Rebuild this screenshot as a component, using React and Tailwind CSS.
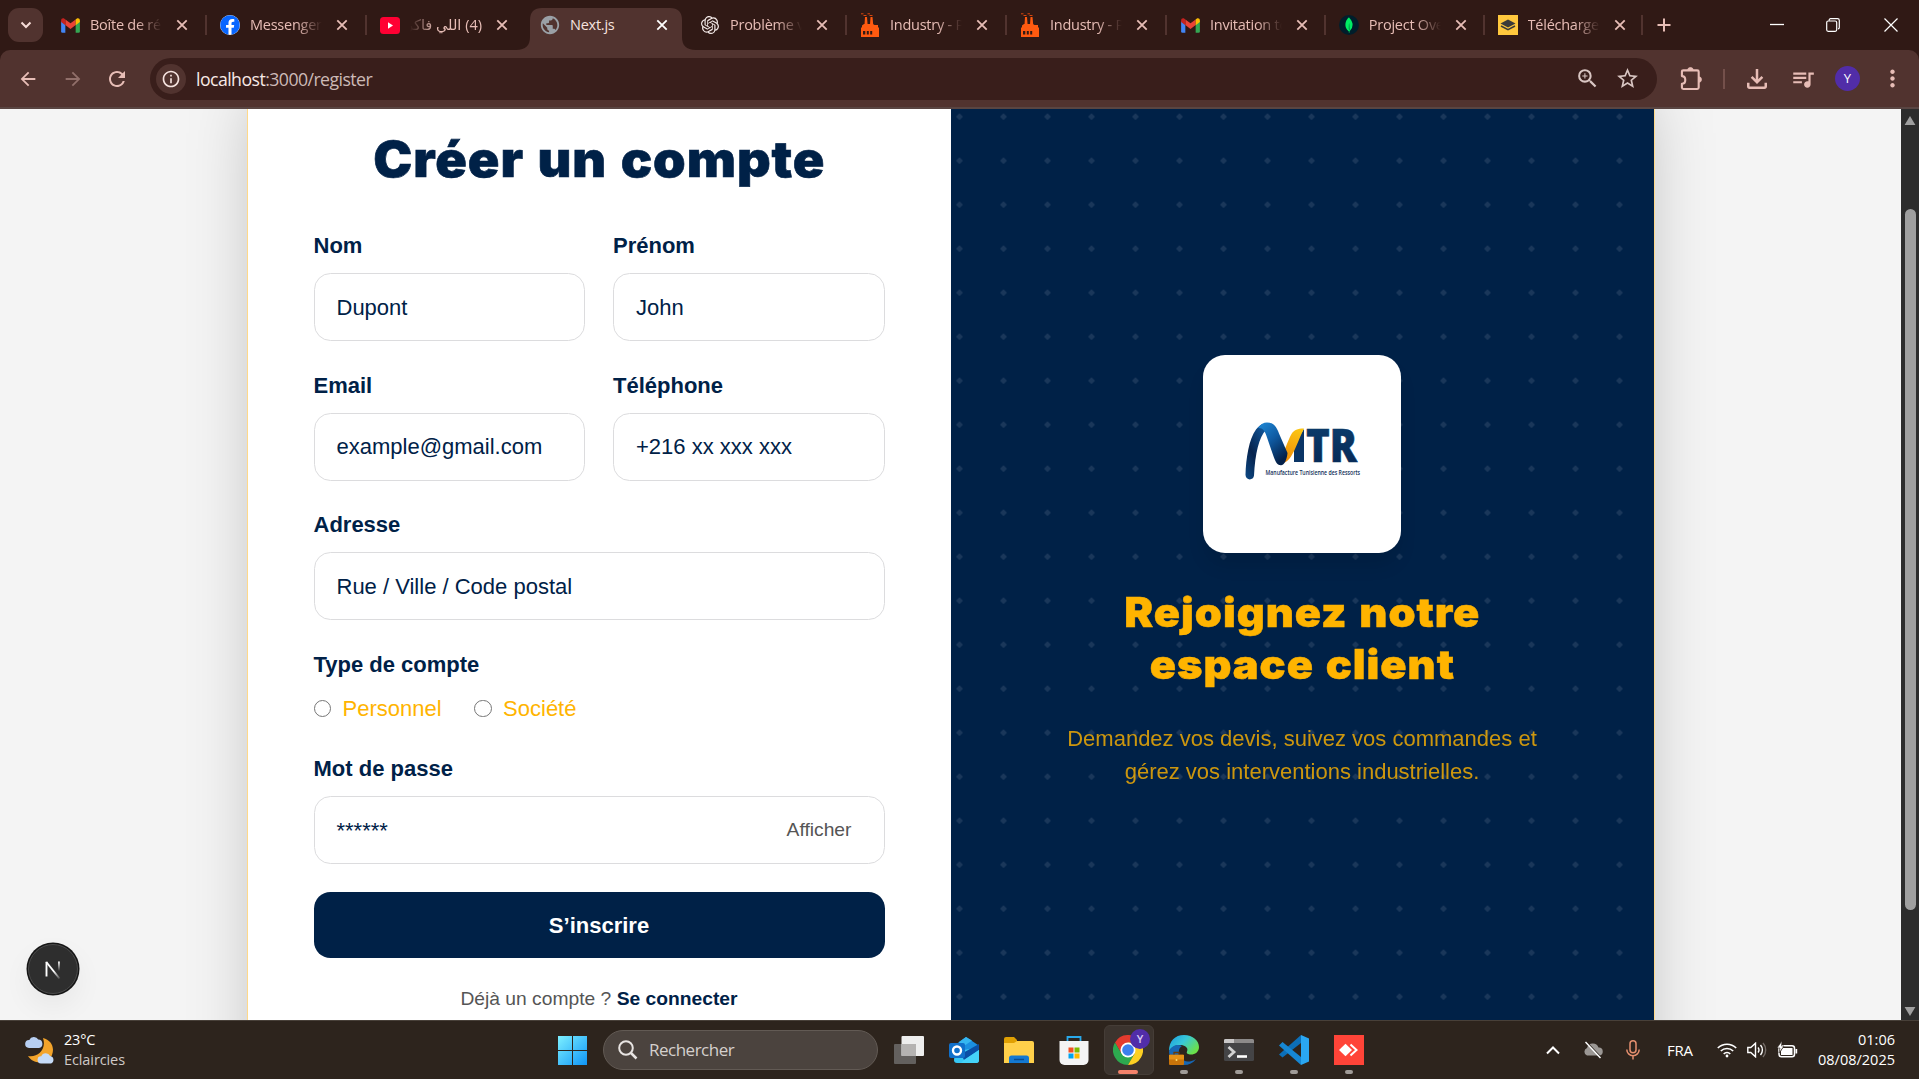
import React from "react";
import { SiOpenai, SiMongodb } from "react-icons/si";
import { FaFacebook } from "react-icons/fa";
import {
  MdArrowBack, MdArrowForward, MdRefresh, MdInfoOutline, MdZoomIn, MdStarBorder,
  MdOutlineFileDownload, MdQueueMusic, MdMoreVert, MdPublic,
} from "react-icons/md";

const Gmail = () => (
  <svg viewBox="0 0 20 16" className="h-[15px] w-[19px]">
    <path d="M0 3v11.500a1.300 1.300 0 0 0 1.300 1.300H4.500V7z" fill="#4285f4" />
    <path d="M20 3v11.500a1.300 1.300 0 0 1-1.300 1.300H15.500V7z" fill="#34a853" />
    <path d="M4.500 1.500v6L10 11.700l5.500-4.200v-6L10 5.700z" fill="#ea4335" />
    <path d="M0 2.300v2L4.500 7.600V1.500L3.500.8C2-.4 0 .5 0 2.300z" fill="#c5221f" />
    <path d="M20 2.300v2L15.500 7.600V1.500L16.500.8C18-.4 20 .5 20 2.300z" fill="#fbbc04" />
  </svg>
);
const Facebook = () => (
  <span className="flex size-5 items-center justify-center rounded-full bg-white">
    <FaFacebook className="size-5 text-[#0866ff]" />
  </span>
);
const YouTube = () => (
  <svg viewBox="0 0 20 17" className="h-[17px] w-5">
    <rect width="20" height="17" rx="3.500" fill="#ff0033" />
    <path d="M8 5.300l5 3.200-5 3.200z" fill="#fff" />
  </svg>
);
const Factory = () => (
  <svg viewBox="0 0 20 24" className="h-6 w-5">
    <path d="M1 14.500h18V24H1zM2 12.500l2-1.500h9l1.500 1h3.500v2.500H2zM5 4h2l.6 7.500H4.500zM10.500 4h2l.7 7.500h-3.200z" fill="#ff5a10" />
    <path d="M1 .8h2.500M3.500 2.500h3M7.500 .8h2.500M9.500 2.500h3" stroke="#d9460c" strokeWidth="1" />
    <path d="M3 18h2.300v3.500H3zM6.800 18h2v3.500h-2zM10.200 18h2v3.500h-2z" fill="#301915" />
  </svg>
);
const Mongo = () => (
  <span className="flex size-5 items-center justify-center rounded-full bg-[#001e2b]">
    <SiMongodb className="size-[16px] text-[#00ed64]" />
  </span>
);
const Layers = () => (
  <svg viewBox="0 0 20 20" className="size-5">
    <rect width="20" height="20" fill="#ffc83d" />
    <path d="M10 4.500l7.500 4-7.500 4-7.500-4z" fill="#3a3a3a" />
    <path d="M3 11l7 3.700 7-3.700" stroke="#3a3a3a" strokeWidth="1.500" fill="none" />
  </svg>
);
const Puzzle = () => (
  <svg viewBox="0 0 24 26" className="h-[25px] w-[23px]" fill="none" stroke="currentColor" strokeWidth="2.200" strokeLinejoin="round">
    <path d="M3.500 4.500H18a1.500 1.500 0 0 1 1.500 1.500v16.500a1.500 1.500 0 0 1-1.500 1.500H3.500a1.500 1.500 0 0 1-1.500-1.500V18.500c2.500 0 3.500-1.800 3.500-4s-1-4-3.500-4V6a1.500 1.500 0 0 1 1.500-1.500z" />
    <path d="M8 4.500a2.900 3 0 0 1 5.800 0zM19.500 11.200a2.900 2.900 0 0 1 0 5.800z" fill="currentColor" strokeWidth=".8" />
  </svg>
);
const CloseX = () => (
  <svg viewBox="0 0 12 12" className="size-3 shrink-0" stroke="currentColor" strokeWidth="1.800">
    <path d="M1.300 1.300l9.400 9.400M10.700 1.300l-9.400 9.400" />
  </svg>
);

const tabs = [
  { icon: <Gmail />, title: "Boîte de réception" },
  { icon: <Facebook />, title: "Messenger" },
  { icon: <YouTube />, title: "(4) اللي فاكر", rtl: true },
  { icon: <MdPublic className="size-[22px] -m-px text-[#9aa0a6]" />, title: "Next.js", active: true },
  { icon: <SiOpenai className="size-[18px] text-[#f3e9e7]" />, title: "Problème véhicule" },
  { icon: <Factory />, title: "Industry - Pro" },
  { icon: <Factory />, title: "Industry - Pro" },
  { icon: <Gmail />, title: "Invitation to" },
  { icon: <Mongo />, title: "Project Overview" },
  { icon: <Layers />, title: "Télécharger" },
];

function Tab({ icon, title, active, rtl, narrow, beforeActive }) {
  return (
    <div className={"relative flex h-[50px] shrink-0 items-center pl-[13px] " + (narrow ? "w-[158.8px]" : "w-[160px]")}>
      {active && (
        <svg viewBox="0 0 180 42" className="absolute -left-[11px] top-2 h-[42px] w-[180px]">
          <path d="M0 42c10 0 14-5 14-13V12C14 4 18 0 26 0h128c8 0 12 4 12 12v17c0 8 4 13 14 13z" fill="#51332f" />
        </svg>
      )}
      <span className="relative flex w-5 shrink-0 justify-center">{icon}</span>
      <span
        dir={rtl ? "rtl" : "ltr"}
        className={
          "relative ml-[10px] w-[72px] shrink-0 overflow-hidden whitespace-nowrap text-[14.5px] leading-[24px] tracking-[-0.25px] " +
          (active
            ? "text-[#f6e3df]"
            : rtl
              ? "text-[#e7bdb6] [mask-image:linear-gradient(to_left,#000_65%,transparent)]"
              : "text-[#e7bdb6] [mask-image:linear-gradient(to_right,#000_65%,transparent)]")
        }
      >
        {title}
      </span>
      <span className={active ? "relative ml-[14px] text-white" : "relative ml-[14px] text-[#e7bdb6]"}><CloseX /></span>
      {!active && !beforeActive && <span className="ml-auto h-5 w-[2px] bg-[#51332f]" />}
    </div>
  );
}

function TabStrip() {
  return (
    <div className="flex h-[50px] items-center bg-[#301915] text-[#e7bdb6]">
      <div className="ml-2 mr-1 flex h-[34px] w-[35px] shrink-0 items-center justify-center rounded-[11px] bg-[#51332f]">
        <svg viewBox="0 0 12 8" className="h-2 w-3" fill="none" stroke="#f6dcd7" strokeWidth="2"><path d="M1.500 1.500L6 6l4.500-4.500" /></svg>
      </div>
      {tabs.map((t, i) => <Tab key={i} {...t} beforeActive={i === 2} narrow={i > 6} />)}
      <svg viewBox="0 0 14 14" className="ml-[14px] size-[14px]" stroke="currentColor" strokeWidth="2"><path d="M7 .5v13M.5 7h13" /></svg>
      <div className="ml-auto flex items-center text-white">
        <svg viewBox="0 0 14 14" className="mr-[42px] size-[14px]" stroke="currentColor" strokeWidth="1.300"><path d="M0 6.500h14" /></svg>
        <svg viewBox="0 0 14 14" className="mr-[44px] size-[14px]" fill="none" stroke="currentColor" strokeWidth="1.200">
          <rect x=".7" y="3" width="10" height="10.300" rx="1.500" /><path d="M3.200 2.800V2a1.300 1.300 0 0 1 1.300-1.300H11.500A1.800 1.800 0 0 1 13.300 2.500V9.500a1.300 1.300 0 0 1-1.300 1.300" />
        </svg>
        <svg viewBox="0 0 14 14" className="mr-[21px] size-[14px]" stroke="currentColor" strokeWidth="1.200"><path d="M.5.5l13 13M13.500.5l-13 13" /></svg>
      </div>
    </div>
  );
}

function Toolbar() {
  return (
    <div className="bg-[#301915]">
      <div className="flex h-[59px] items-center rounded-t-[10px] border-b-2 border-[#594542] bg-[#51332f] text-[#e7bdb6]">
        <MdArrowBack className="ml-[17px] size-[22px]" />
        <MdArrowForward className="ml-[23px] size-[22px] text-[#916f6a]" />
        <MdRefresh className="ml-[21px] size-6" />
        <div className="ml-[21px] flex h-[42px] w-[1507px] items-center rounded-full bg-[#391e1b]">
          <span className="ml-[6px] flex size-[30px] items-center justify-center rounded-full bg-[#51332f]">
            <MdInfoOutline className="size-5 text-[#f6e3df]" />
          </span>
          <span className="ml-[10px] text-[17.7px] leading-6 tracking-[-0.55px] text-[#cdbab7]">
            <span className="text-[#f8e9e6]">localhost</span>:3000/register
          </span>
          <MdZoomIn className="ml-auto mr-[15px] size-[25px] text-[#d9c6c3]" />
          <MdStarBorder className="mr-[17px] size-[25px] text-[#d9c6c3]" />
        </div>
        <span className="ml-[23px]"><Puzzle /></span>
        <span className="ml-[20px] h-5 w-[2px] bg-[#74504b]" />
        <MdOutlineFileDownload className="ml-[17px] size-[30px]" />
        <MdQueueMusic className="ml-[18px] size-[26px]" />
        <span className="ml-[19px] flex size-[25px] items-center justify-center rounded-full bg-[#512da8] text-[13px] text-white">Y</span>
        <MdMoreVert className="ml-[19px] size-[27px]" />
      </div>
    </div>
  );
}

function Field({ label, value, action }) {
  return (
    <label className="block">
      <span className="block text-[22px] font-bold leading-[33px]">{label}</span>
      <span className="mt-[11px] flex h-[68px] items-center rounded-[16.5px] border border-[#dcdcde] px-[22px] text-[22px]">
        <span>{value}</span>
        {action && <span className="ml-auto mr-[10px] text-[19.25px] text-[#555]">{action}</span>}
      </span>
    </label>
  );
}

function Radio({ label }) {
  return (
    <span className="flex items-center gap-[11.5px]">
      <span className="size-[17.5px] rounded-full border-[1.400px] border-[#767676] bg-white" />
      {label}
    </span>
  );
}

function FormPanel() {
  return (
    <div className="w-[703px] px-[66px] pt-[83px] text-[#002147]">
      <h1 className="text-center font-['Inter',sans-serif] text-[49.5px] font-black leading-[55px]">
        <span className="inline-block scale-x-[1.055] tracking-[0.9px] [word-spacing:2px] [-webkit-text-stroke:0.6px_#002147]">Créer un compte</span>
      </h1>
      <div className="mt-[42px] grid grid-cols-2 gap-x-[28px] gap-y-[27.5px]">
        <Field label="Nom" value="Dupont" />
        <Field label="Prénom" value="John" />
        <Field label="Email" value="example@gmail.com" />
        <Field label="Téléphone" value="+216 xx xxx xxx" />
        <div className="col-span-2"><Field label="Adresse" value="Rue / Ville / Code postal" /></div>
      </div>
      <p className="mt-[28px] text-[22px] font-bold leading-[33px]">Type de compte</p>
      <div className="mt-[11px] flex gap-[32.5px] text-[22px] leading-[33px] text-[#ffb400]">
        <Radio label="Personnel" />
        <Radio label="Société" />
      </div>
      <div className="mt-[27px]"><Field label="Mot de passe" value="******" action="Afficher" /></div>
      <button className="mt-[28px] h-[66px] w-full rounded-[16.5px] bg-[#002147] text-[22px] font-bold text-white">S’inscrire</button>
      <p className="mt-[27px] text-center text-[19.25px] leading-[28px] text-[#555]">
        Déjà un compte ? <span className="font-bold text-[#002147]">Se connecter</span>
      </p>
    </div>
  );
}

function MtrLogo() {
  return (
    <svg viewBox="0 0 198 198" className="size-[198px]">
      <defs>
        <linearGradient id="m1" x1="0" y1="1" x2=".6" y2="0"><stop offset="0" stopColor="#0d4a86" /><stop offset=".5" stopColor="#06234d" /><stop offset="1" stopColor="#0f4f90" /></linearGradient>
        <linearGradient id="m2" x1="0" y1="0" x2=".6" y2="1"><stop offset="0" stopColor="#1f8ad8" /><stop offset=".5" stopColor="#0f5ba3" /><stop offset="1" stopColor="#04214a" /></linearGradient>
        <linearGradient id="m3" x1=".6" y1="0" x2="0.300" y2="1"><stop offset="0" stopColor="#fbc412" /><stop offset="1" stopColor="#f08a08" /></linearGradient>
        <linearGradient id="m4" x1="0" y1="0" x2="0" y2="1"><stop offset="0" stopColor="#0d4272" /><stop offset="1" stopColor="#062450" /></linearGradient>
      </defs>
      <path d="M42.500 120C43 103 46 84 53 74.500c3-4 6-6 8-5.500l2 6c-7 7-11 24-12 45.500-.5 5-8 5.500-8.500-.5z" fill="url(#m1)" />
      <path d="M91 107V89L101 74v33z" fill="#0a3566" />
      <path d="M76.500 105c5-8 8-19 12-26 2.500-4 6-5.500 12.500-5.500-5 10-8 20-13 28-2 3-5 6-8 6.500z" fill="url(#m3)" />
      <path d="M55 73c3-4 5.500-5.600 9-5.600 6 0 9.500 4 12 11L84.500 98c-.5 6-3 12.300-6.500 12.300-4.500 0-6-5-7.500-9L63.500 81c-1.500-5-4-8.500-8.500-8z" fill="url(#m2)" />
      <text x="103" y="107" fontFamily="Open Sans, sans-serif" fontWeight="800" fontSize="46" textLength="51" lengthAdjust="spacingAndGlyphs" fill="url(#m4)" stroke="#0a3362" strokeWidth=".6">TR</text>
      <text x="62.500" y="119.500" fontFamily="Open Sans, sans-serif" fontWeight="600" fontSize="6.200" textLength="94.500" lengthAdjust="spacingAndGlyphs" fill="#123058">Manufacture Tunisienne des Ressorts</text>
    </svg>
  );
}

function BrandPanel() {
  return (
    <div className="flex w-[703px] flex-col items-center bg-[#002147] bg-[radial-gradient(circle,#1a375a_2.750px,transparent_2.750px)] bg-[size:44px_44px] bg-[position:-13.500px_1.700px] pt-[306px] text-center text-[#ffb400]">
      <div className="rounded-[22px] bg-white shadow-[0_14px_20px_-4px_rgba(0,0,0,0.12)]"><MtrLogo /></div>
      <h2 className="mt-[34px] w-[420px] font-['Inter',sans-serif] text-[40.500px] font-black leading-[51.560px]">
        <span className="inline-block scale-x-[1.070] tracking-[0.9px] [word-spacing:2px] [-webkit-text-stroke:0.5px_#ffb400]">Rejoignez notre<br />espace client</span>
      </h2>
      <p className="mt-[32px] w-[500px] text-[22px] leading-[33px] opacity-80">Demandez vos devis, suivez vos commandes et gérez vos interventions industrielles.</p>
    </div>
  );
}

function Page() {
  return (
    <div className="relative flex h-[911px] overflow-hidden bg-[#f4f4f4] font-['Liberation_Sans',Arial,sans-serif]">
      <main className="flex h-[911px] flex-1 justify-center overflow-hidden">
        <div className="-mt-[60px] flex h-[1060px] w-[1408px] shrink-0 border-x border-[#ffd98a] bg-white shadow-[0_34px_68px_-16px_rgba(0,0,0,0.28)]">
          <FormPanel />
          <BrandPanel />
        </div>
      </main>
      <div className="flex w-[18px] flex-col items-center bg-[#2c2c2c]">
        <svg viewBox="0 0 12 10" className="mt-[7px] h-[9px] w-3" fill="#9f9f9f"><path d="M6 0l6 10H0z" /></svg>
        <div className="mt-[84px] h-[701px] w-[11px] rounded-full bg-[#9f9f9f]" />
        <svg viewBox="0 0 12 10" className="mb-[4px] mt-auto h-[9px] w-3" fill="#9f9f9f"><path d="M6 10l6-10H0z" /></svg>
      </div>
      <div className="absolute bottom-[26px] left-[28px] flex size-[50px] items-center justify-center rounded-full border border-[#4a4a4a] bg-[#2e2e2e] shadow-[0_12px_30px_rgba(0,0,0,0.06),0_0_0_1.5px_#171717]">
        <svg viewBox="0 0 20 20" className="size-5" fill="none">
          <defs>
            <linearGradient id="n1" gradientUnits="userSpaceOnUse" x1="11" y1="12" x2="17" y2="19"><stop offset="0" stopColor="#fff" /><stop offset="1" stopColor="#fff" stopOpacity="0.15" /></linearGradient>
            <linearGradient id="n2" gradientUnits="userSpaceOnUse" x1="0" y1="2" x2="0" y2="12"><stop offset="0" stopColor="#fff" /><stop offset="1" stopColor="#fff" stopOpacity="0" /></linearGradient>
          </defs>
          <path d="M3.500 17.500V2.800" stroke="#fff" strokeWidth="1.900" />
          <path d="M3.300 3L16.500 19.500" stroke="url(#n1)" strokeWidth="1.900" />
          <path d="M15 2.500h1.900v10H15z" fill="url(#n2)" />
        </svg>
      </div>
    </div>
  );
}

const apps = {
  outlook: (
    <svg viewBox="0 0 30 30" className="size-[30px]">
      <path d="M6 10L17 2l12 8v6L6 22z" fill="#1b8fe0" /><path d="M10 7l7-5 6 3.500L12 13z" fill="#35b6f0" />
      <path d="M6 17L30 12v13a3 3 0 0 1-3 3H8a3 3 0 0 1-3-3z" fill="#37c8f5" /><path d="M12 19L30 9v6L15 25z" fill="#0a4fa5" /><path d="M15 25l15-10v10a3 3 0 0 1-3 3H12z" fill="#45d3f8" />
      <rect y="8" width="16" height="15" rx="2" fill="#1070ca" /><circle cx="8" cy="15.500" r="4" fill="none" stroke="#fff" strokeWidth="2.400" />
    </svg>
  ),
  folder: (
    <svg viewBox="0 0 30 30" className="size-[30px]">
      <path d="M0 4a2 2 0 0 1 2-2h8l3 3v6H0z" fill="#e0a003" /><path d="M0 8h10l3-2h15a2 2 0 0 1 2 2v20H0z" fill="#ffd04a" />
      <path d="M5 28v-5a2.500 2.500 0 0 1 2.500-2.500h15A2.500 2.500 0 0 1 25 23v5z" fill="#1479d2" /><path d="M10 24.500h10" stroke="#0a4c90" strokeWidth="1.500" />
    </svg>
  ),
  store: (
    <svg viewBox="0 0 30 30" className="size-[30px]">
      <path d="M8.500 8V2h13v6" fill="none" stroke="#29a9ea" strokeWidth="1.800" /><path d="M.5 6h29v19a5 5 0 0 1-5 5h-19a5 5 0 0 1-5-5z" fill="#f4f4f4" />
      <path d="M9.500 12.500h5v5h-5z" fill="#f25022" /><path d="M15.500 12.500h5v5h-5z" fill="#7fba00" /><path d="M9.500 18.500h5v5h-5z" fill="#00a4ef" /><path d="M15.500 18.500h5v5h-5z" fill="#ffb900" />
    </svg>
  ),
  chrome: (
    <svg viewBox="0 0 30 30" className="size-[30px]">
      <path d="M2 7.500A15 15 0 0 1 28 7.500H15L8.500 18.700z" fill="#e33b2e" />
      <path d="M2 7.500A15 15 0 0 0 15 30l6.500-11.300H8.500z" fill="#2da94f" />
      <path d="M28 7.500A15 15 0 0 1 15 30l6.500-11.300L15 7.500z" fill="#fdd023" />
      <circle cx="15" cy="15" r="7.500" fill="#fff" /><circle cx="15" cy="15" r="5.800" fill="#3c80ee" />
    </svg>
  ),
  edge: (
    <svg viewBox="0 0 30 30" className="size-[30px]">
      <defs><linearGradient id="eg" x1="0" y1="0" x2="1" y2=".6"><stop offset="0" stopColor="#1a9be0" /><stop offset=".5" stopColor="#38c8d8" /><stop offset="1" stopColor="#6be04a" /></linearGradient></defs>
      <path d="M0 16C0 6 6 0 15 0s15 6 15 12c0 5-4 7.500-8 7.500-3 0-5-1-4-3 2-4-3-6.500-6.500-6.500C6 10 2 13 0 16z" fill="url(#eg)" />
      <path d="M0 16c3-6 9-7 13-5-4 2-4 8-1 12s8 5 15 1c-3 4-7 6-12 6C6 30 0 24 0 16z" fill="#1767b4" />
      <rect y="19.500" width="15" height="10.500" rx="1" fill="#c9740a" /><path d="M0 20h15v4.500H0z" fill="#e69215" /><path d="M5 19.500v-2h5v2" fill="none" stroke="#6b3d05" strokeWidth="1.300" /><circle cx="7.500" cy="25" r="1" fill="#ffdf6b" />
    </svg>
  ),
  terminal: (
    <svg viewBox="0 0 30 30" className="size-[30px]">
      <rect y="4" width="30" height="22" rx="1.500" fill="#444446" /><path d="M0 5.500A1.500 1.500 0 0 1 1.500 4h27A1.500 1.500 0 0 1 30 5.500V8H0z" fill="#8c8a8a" /><path d="M0 5.500A1.500 1.500 0 0 1 1.500 4H10v4H0z" fill="#c9c7c7" />
      <path d="M4.500 12l5.500 5-5.500 5" fill="none" stroke="#d2d2d2" strokeWidth="2.800" /><path d="M13 21.500h10" stroke="#fff" strokeWidth="2.600" />
    </svg>
  ),
  code: (
    <svg viewBox="0 0 30 30" className="size-[30px]">
      <path d="M22 0v8L3.500 22.500 0 19.500z" fill="#0c6fb8" /><path d="M22 30v-8L3.500 7 0 10.500z" fill="#1687d4" /><path d="M22 0l8 3.500v23L22 30z" fill="#2aa7f2" />
    </svg>
  ),
  anydesk: (
    <svg viewBox="0 0 30 30" className="size-[30px]">
      <rect width="30" height="30" fill="#ff4438" /><path d="M5 15l6.500-6.200L18 15l-6.500 6.200z" fill="#fff" /><path d="M16.500 9.500L22.500 15l-6 5.500" fill="none" stroke="#fff" strokeWidth="2" />
    </svg>
  ),
};

function AppButton({ name, open }) {
  return (
    <div className="flex h-[59px] w-[55px] flex-col items-center pt-[14px]">
      {apps[name]}
      {open && <span className="mt-[5px] h-1 w-2 rounded-full bg-[#a09b97]" />}
    </div>
  );
}

function Taskbar() {
  return (
    <div className="flex h-[59px] items-center border-t border-[#484039] bg-[#2d241d] text-white">
      <svg viewBox="0 0 30 30" className="ml-[25px] size-[30px]">
        <path d="M18 3c8 2 12 9 9 17S9 31 3 21c9 2 19-6 15-18z" fill="#f3a42b" />
        <path d="M4 13a4 4 0 0 1 .3-8 5 5 0 0 1 9-.5A4.300 4.300 0 0 1 14 13z" fill="#b7cff2" />
        <path d="M16 28.500a3.600 3.600 0 0 1 .3-7.200 4.800 4.800 0 0 1 8.800-.4 4 4 0 0 1 1 7.600z" fill="#c6dbf7" />
      </svg>
      <div className="ml-[9px] w-[100px] text-[14.500px] leading-5">
        <div className="tracking-[-0.200px]">23°C</div>
        <div className="tracking-[-0.100px] text-[#cfcac7]">Eclaircies</div>
      </div>
      <svg viewBox="0 0 29 29" className="ml-[394px] size-[29px]">
        <defs><linearGradient id="win" x1="0" y1="0" x2="1" y2="1"><stop offset="0" stopColor="#7df0ff" /><stop offset="1" stopColor="#0f95f7" /></linearGradient></defs>
        <path d="M0 0h14v14H0zM15 0h14v14H15zM0 15h14v14H0zM15 15h14v14H15z" fill="url(#win)" />
      </svg>
      <div className="ml-[16px] flex h-10 w-[275px] items-center rounded-full border border-[#625a54] bg-[#4b433e]">
        <svg viewBox="0 0 20 20" className="ml-[14px] size-5" fill="none" stroke="#e8e4e2" strokeWidth="2"><circle cx="8" cy="8" r="6.800" /><path d="M13 13l5.500 5.500" strokeWidth="2.500" /></svg>
        <span className="ml-[11px] text-[17px] tracking-[-0.500px] text-[#d5d0cd]">Rechercher</span>
      </div>
      <svg viewBox="0 0 30 28" className="ml-[16px] mr-[12px] h-7 w-[30px]">
        <rect y="8" width="22" height="20" rx="1" fill="#63605e" /><rect x="7.500" width="22.500" height="20" rx="1" fill="#eee" /><path d="M7.500 8H22v12H7.500z" fill="#b5b3b2" />
      </svg>
      <AppButton name="outlook" />
      <AppButton name="folder" />
      <AppButton name="store" />
      <div className="relative ml-[3px] flex h-[50px] w-[50px] flex-col items-center rounded-md border border-[#453d37] bg-[#3c342e] pr-[2px] pt-[9px]">
        {apps.chrome}
        <span className="mt-[5px] h-1 w-5 rounded-full bg-[#f4826a]" />
        <span className="absolute right-[3px] top-[3px] flex size-5 items-center justify-center rounded-full bg-[#512da8] text-[11px] font-semibold text-[#d8c9f5]">Y</span>
      </div>
      <span className="w-[2px]" />
      <AppButton name="edge" open />
      <AppButton name="terminal" open />
      <AppButton name="code" open />
      <AppButton name="anydesk" open />
      <div className="ml-auto flex items-center">
        <svg viewBox="0 0 14 9" className="h-[9px] w-[14px]" fill="none" stroke="#fff" strokeWidth="2"><path d="M1 7.500l6-6 6 6" /></svg>
        <svg viewBox="0 0 20 18" className="ml-[23px] h-[18px] w-5"><path d="M4 14.500A4 4 0 0 1 4 7a6 6 0 0 1 11.500-.5A4 4 0 0 1 16 14.500z" fill="#9b9794" /><path d="M3.500 1l15 16" stroke="#2d241d" strokeWidth="1.500" /><path d="M2.500 1l15 16" stroke="#fff" strokeWidth="1.400" /></svg>
        <svg viewBox="0 0 14 20" className="ml-[23px] h-5 w-[14px]" fill="none" stroke="#e58f6f" strokeWidth="1.500"><rect x="4" y=".8" width="6" height="12" rx="3" /><path d="M.8 9.500a6.200 6.200 0 0 0 12.400 0M7 16v3.500" /></svg>
        <span className="ml-[27px] w-[28px] text-[15px] tracking-[-0.300px]">FRA</span>
        <svg viewBox="0 0 20 16" className="ml-[22px] h-4 w-5" fill="none" stroke="#fff" strokeWidth="1.600"><path d="M.8 6a13 13 0 0 1 18.400 0M3.800 9a8.800 8.800 0 0 1 12.400 0M6.700 12a4.700 4.700 0 0 1 6.600 0" /><circle cx="10" cy="14" r="1.400" fill="#fff" stroke="none" /></svg>
        <svg viewBox="0 0 20 16" className="ml-[10px] h-4 w-5" fill="none" stroke="#fff" strokeWidth="1.400"><path d="M.8 5.500h3L8.500 1.200v13.600L3.800 10.500h-3zM11 5.500a4 4 0 0 1 0 5M13.500 3a7.500 7.500 0 0 1 0 10" /><path d="M16 1a10.500 10.500 0 0 1 0 14" stroke="#746c67" /></svg>
        <svg viewBox="0 0 21 18" className="ml-[10px] h-[18px] w-[21px]"><rect x="2" y="4.800" width="15.500" height="11" rx="2.500" fill="none" stroke="#fff" strokeWidth="1.500" /><path d="M6 7h9.500v7H4V10zM18.500 8h1.700v4.500h-1.700z" fill="#fff" /><path d="M5 0L0 7h3L2 12l5-7H4.500z" fill="#fff" stroke="#2d241d" strokeWidth=".6" /></svg>
        <div className="ml-[16px] mr-[24px] w-[81px] whitespace-nowrap text-right text-[14.500px] leading-5">
          <div>01:06</div>
          <div>08/08/2025</div>
        </div>
      </div>
    </div>
  );
}

export default function App() {
  return (
    <div className="flex h-[1079px] w-[1919px] flex-col overflow-hidden font-['Open_Sans','Noto_Sans','DejaVu_Sans',sans-serif]">
      <TabStrip />
      <Toolbar />
      <Page />
      <Taskbar />
    </div>
  );
}
